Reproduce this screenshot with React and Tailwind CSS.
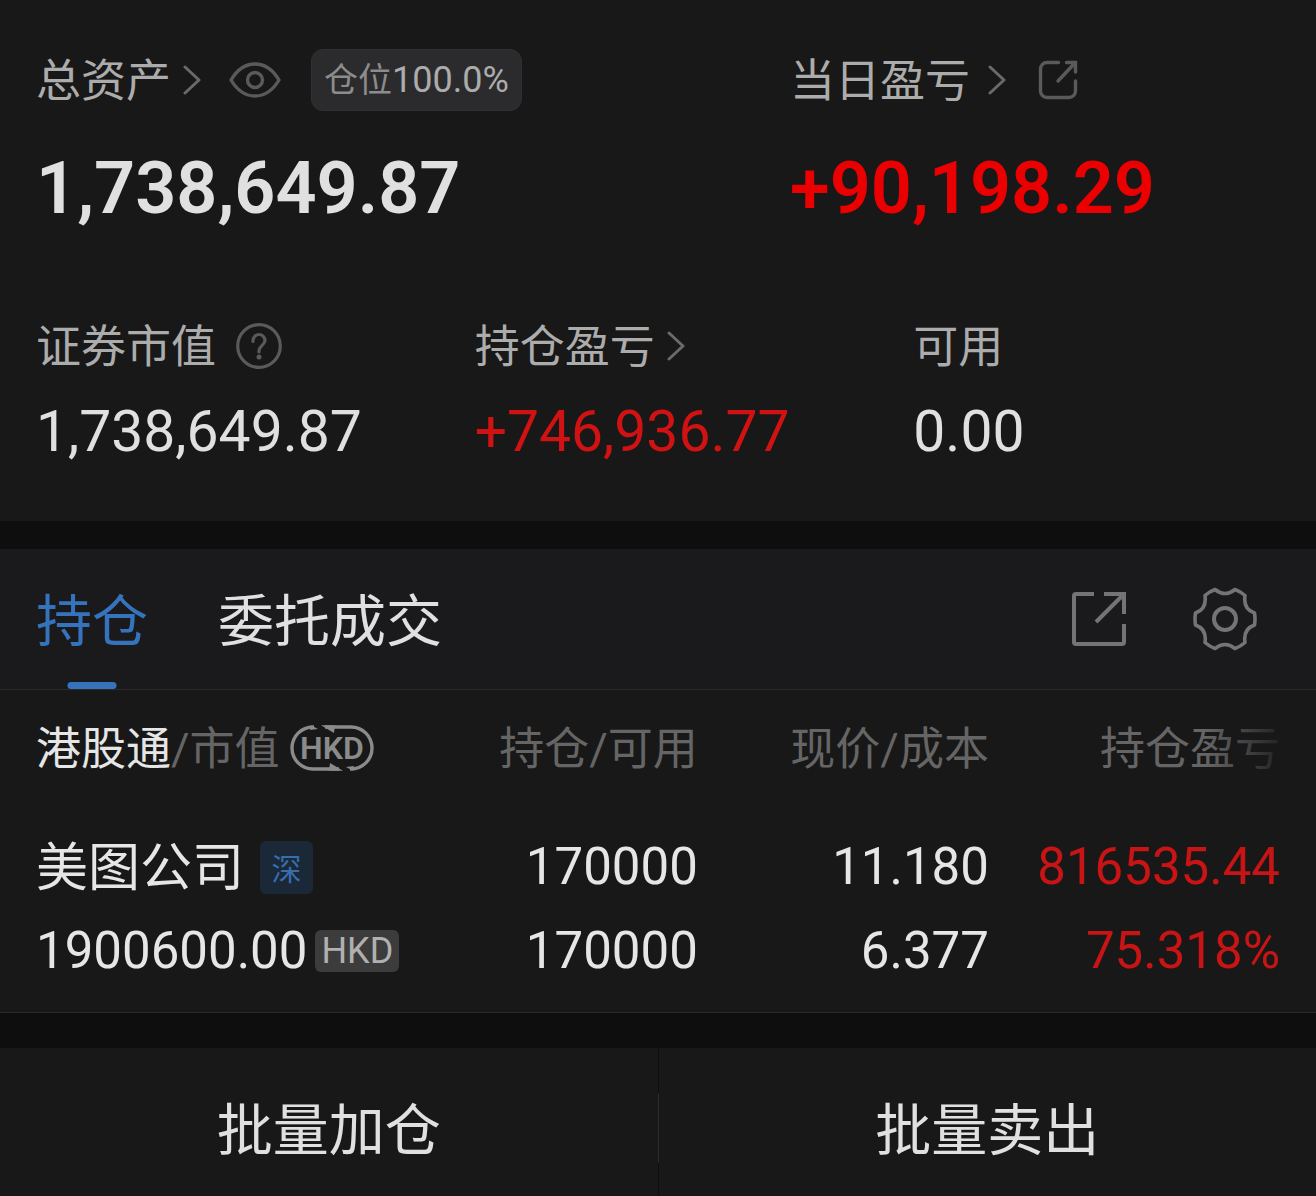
import { useState } from "react";

const positions = [
  {
    name: "美图公司",
    market: "深",
    value: "1900600.00",
    currency: "HKD",
    holding: "170000",
    available: "170000",
    price: "11.180",
    cost: "6.377",
    profit: "816535.44",
    rate: "75.318%",
  },
];

function Chevron({ className }) {
  return (
    <svg viewBox="0 0 18 30" fill="none" stroke="#6a6a6a" strokeWidth="3" strokeLinecap="round" strokeLinejoin="round" className={`h-[30px] w-[18px] shrink-0 ${className}`}>
      <path d="M2 2l14 13L2 28" />
    </svg>
  );
}

function EyeIcon() {
  return (
    <svg viewBox="0 0 52 36" fill="none" stroke="#5a5a5a" strokeWidth="3.4" className="h-9 w-[52px]">
      <path d="M2 18C8 8 16 2 26 2s18 6 24 16c-6 10-14 16-24 16S8 28 2 18z" strokeLinejoin="round" />
      <circle cx="26" cy="18" r="7.500" />
    </svg>
  );
}

function ShareIcon() {
  return (
    <svg viewBox="0 0 40 40" fill="none" stroke="#5a5a5a" strokeWidth="3.4" strokeLinecap="round" className="size-10">
      <path d="M20.500 2.500H9a6.500 6.500 0 0 0-6.500 6.500v22A6.500 6.500 0 0 0 9 37.500h22a6.500 6.500 0 0 0 6.500-6.500V21" />
      <path d="M28.500 2.500h9V12M37 3L20 21" />
    </svg>
  );
}

function ExportIcon() {
  return (
    <svg viewBox="0 0 54 54" fill="none" stroke="#747474" strokeWidth="4" className="size-[54px]">
      <path d="M22 2H4a2 2 0 0 0-2 2v46a2 2 0 0 0 2 2h46a2 2 0 0 0 2-2V32" />
      <path d="M32 2h20v20M51 3L24 30" />
    </svg>
  );
}

function GearIcon() {
  return (
    <svg viewBox="0 0 64 64" fill="none" stroke="#747474" strokeWidth="3.6" strokeLinejoin="round" className="size-16">
      <path d="M22 2.500Q32 10.500 42 2.500Q47.500 4.500 52 8.500Q50 22 61.500 26Q62.500 32 61.500 38Q50 42 52 55.500Q47.500 59.500 42 61.500Q32 53.500 22 61.500Q16.500 59.500 12 55.500Q14 42 2.500 38Q1.500 32 2.500 26Q14 22 12 8.500Q16.500 4.500 22 2.500z" />
      <circle cx="32" cy="32" r="11" strokeWidth="4" />
    </svg>
  );
}

function HelpIcon() {
  return (
    <svg viewBox="0 0 46 46" fill="none" stroke="#5a5a5a" strokeWidth="3.2" className="size-[46px]">
      <circle cx="23" cy="23" r="21.300" />
      <path d="M17 18.500v-1a6 6 0 0 1 12 0c0 4.500-6 5.500-6 10.500v1" strokeLinecap="round" />
      <circle cx="23" cy="34" r="2.500" fill="#5a5a5a" stroke="none" />
    </svg>
  );
}

function CurrencySwitchIcon() {
  return (
    <svg viewBox="0 0 84 46" fill="none" stroke="#8b8b8b" strokeWidth="3.4" className="h-[46px] w-[84px]">
      <path d="M24 2h-1a21 21 0 0 0 0 42h26" />
      <path d="M60 44h1a21 21 0 0 0 0-42H35" />
      <path d="M21 .3L28 4l-8 1zM31 .3h14l-1 7.700zM53 45.700H39l1-7.700zM63 45.700L56 42l8-1z" fill="#8b8b8b" stroke="none" />
      <text x="42" y="34" textAnchor="middle" fill="#8b8b8b" stroke="none" className="text-[32px] font-semibold">HKD</text>
    </svg>
  );
}

function Summary() {
  return (
    <section className="bg-[#181818] pt-[49px] pb-[54px]">
      <div className="flex">
        <div className="w-[57.3%] pl-9">
          <div className="flex h-[62px] items-center">
            <a href="#assets" className="flex items-center text-[45px]/[62px] text-[#acacac]">
              <span className="pt-1">总资产</span>
              <Chevron className="ml-3" />
            </a>
            <button type="button" aria-label="显示或隐藏资产" className="ml-7">
              <EyeIcon />
            </button>
            <span className="ml-[30px] rounded-xl border border-[#303032] bg-[#2b2b2d] px-3 text-[34px]/[60px] text-[#8c8c8c]">
              仓位<span className="text-[36px] text-[#acacac]">100.0%</span>
            </span>
          </div>
          <div className="mt-9 text-[72px]/[84px] font-semibold text-[#e0e0e0]">1,738,649.87</div>
        </div>
        <div className="pl-9">
          <div className="flex h-[62px] items-center">
            <a href="#today" className="flex items-center text-[45px]/[62px] text-[#acacac]">
              <span className="pt-1">当日盈亏</span>
              <Chevron className="ml-[18px]" />
            </a>
            <button type="button" aria-label="分享当日盈亏" className="ml-8">
              <ShareIcon />
            </button>
          </div>
          <div className="mt-9 text-[72px]/[84px] font-semibold text-[#ea0000]">+90,198.29</div>
        </div>
      </div>

      <div className="mt-[84px] grid grid-cols-3">
        <div className="pl-9">
          <div className="flex h-[62px] items-center text-[45px]/[62px] text-[#acacac]">
            <span className="pt-1">证券市值</span>
            <button type="button" aria-label="证券市值说明" className="ml-5">
              <HelpIcon />
            </button>
          </div>
          <div className="mt-5 text-[57px]/[70px] text-[#e0e0e0]">1,738,649.87</div>
        </div>
        <div className="pl-9">
          <a href="#profit" className="flex h-[62px] items-center text-[45px]/[62px] text-[#acacac]">
            <span className="pt-1">持仓盈亏</span>
            <Chevron className="ml-3" />
          </a>
          <div className="mt-5 text-[57px]/[70px] text-[#d01212]">+746,936.77</div>
        </div>
        <div className="pl-9">
          <div className="flex h-[62px] items-center text-[45px]/[62px] text-[#acacac]">
            <span className="pt-1">可用</span>
          </div>
          <div className="mt-5 text-[57px]/[70px] text-[#e0e0e0]">0.00</div>
        </div>
      </div>
    </section>
  );
}

function Tabs() {
  const [active, setActive] = useState("持仓");
  return (
    <nav className="flex h-[141px] items-stretch border-b border-[#2a2a2a] bg-[#1a1a1c] pr-[59px] pl-9">
      <div role="tablist" className="flex gap-[70px]">
        {["持仓", "委托成交"].map((tab) => (
          <button
            key={tab}
            type="button"
            role="tab"
            aria-selected={active === tab}
            onClick={() => setActive(tab)}
            className={`relative pt-1.5 text-[56px]/[134px] ${active === tab ? "text-[#3574bd]" : "text-[#e0e0e0]"}`}
          >
            {tab}
            {active === tab && (
              <span className="absolute bottom-0 left-1/2 h-[7px] w-[49px] -translate-x-1/2 rounded-full bg-[#3574bd]" />
            )}
          </button>
        ))}
      </div>
      <div className="ml-auto flex items-center gap-[67px]">
        <button type="button" aria-label="导出持仓">
          <ExportIcon />
        </button>
        <button type="button" aria-label="设置">
          <GearIcon />
        </button>
      </div>
    </nav>
  );
}

function Positions() {
  return (
    <section className="relative border-b border-[#2a2a2a] bg-[#181818] px-9">
      <table className="w-full table-fixed text-right">
        <thead>
          <tr className="h-[116px] text-[45px]/[62px] whitespace-nowrap text-[#656565]">
            <th className="text-left font-normal">
              <div className="flex items-center">
                <span className="pt-1">
                  <span className="text-[#e6e6e6]">港股通</span>/市值
                </span>
                <button type="button" aria-label="切换币种" className="ml-2.5">
                  <CurrencySwitchIcon />
                </button>
              </div>
            </th>
            <th className="w-[23.4%] pt-1 font-normal">持仓/可用</th>
            <th className="w-[23.4%] pt-1 font-normal">现价/成本</th>
            <th className="w-[23.4%] pt-1 font-normal">持仓盈亏</th>
          </tr>
        </thead>
        <tbody>
          {positions.map((p) => (
            <tr key={p.name} className="text-[51px]/[84px] text-[#e6e6e6]">
              <td className="py-[19px] text-left">
                <div className="flex h-[84px] items-center">
                  <span className="pt-1 text-[52px]">{p.name}</span>
                  <span className="ml-4 size-[53px] rounded-md bg-[#1b2838] pt-1 text-center text-[30px]/[49px] text-[#376dac]">
                    {p.market}
                  </span>
                </div>
                <div className="flex h-[84px] items-center">
                  {p.value}
                  <span className="ml-2 rounded-md bg-[#3c3c3c] px-1.5 text-[36px]/[42px] text-[#b0b0b0]">{p.currency}</span>
                </div>
              </td>
              <td className="py-[19px]">
                <div>{p.holding}</div>
                <div>{p.available}</div>
              </td>
              <td className="py-[19px]">
                <div>{p.price}</div>
                <div>{p.cost}</div>
              </td>
              <td className="py-[19px] text-[#c81414]">
                <div>{p.profit}</div>
                <div>{p.rate}</div>
              </td>
            </tr>
          ))}
        </tbody>
      </table>
      <div className="pointer-events-none absolute top-0 right-0 h-[110px] w-[110px] bg-linear-to-r from-transparent to-[#181818] to-80%" />
    </section>
  );
}

function BatchActions() {
  return (
    <div className="flex h-[148px] bg-[#181818] text-[56px]/[130px] text-[#e0e0e0]">
      <button type="button" className="flex-1 pt-[18px]">批量加仓</button>
      <div className="flex w-px flex-col bg-[#0e0e0e] pt-[45px]">
        <div className="h-[70px] bg-[#2a2a2a]" />
      </div>
      <button type="button" className="flex-1 pt-[18px]">批量卖出</button>
    </div>
  );
}

export default function App() {
  return (
    <main className="min-h-screen bg-[#181818] font-[Roboto,'Noto_Sans_CJK_SC',sans-serif]">
      <Summary />
      <div className="h-7 bg-[#0e0e0e]" />
      <Tabs />
      <Positions />
      <div className="h-[35px] bg-[#0e0e0e]" />
      <BatchActions />
    </main>
  );
}
